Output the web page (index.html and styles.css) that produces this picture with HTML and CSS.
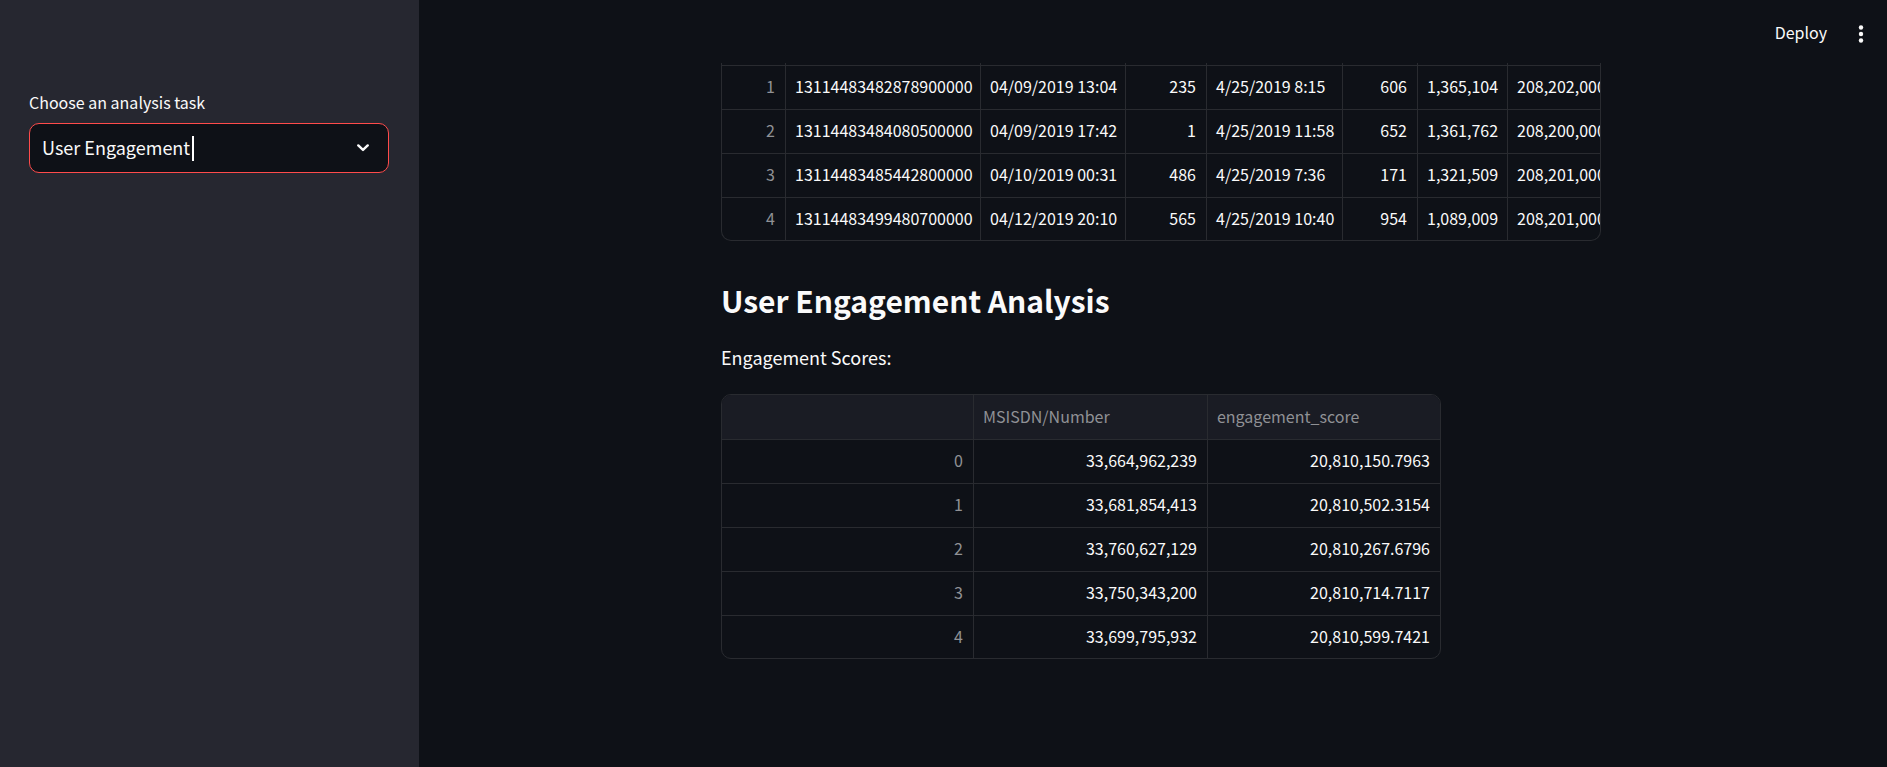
FILE: index.html
```html
<!DOCTYPE html>
<html lang="en">
<head>
<meta charset="utf-8">
<meta name="viewport" content="width=device-width, initial-scale=1">
<title>User Engagement Analysis</title>
<link rel="stylesheet" href="styles.css">
</head>
<body>
<div class="app">
  <aside class="sidebar">
    <label class="field-label" for="task">Choose an analysis task</label>
    <div class="select-box">
      <select id="task" class="select">
        <option>User Engagement</option>
      </select>
      <span class="caret"></span>
      <svg class="chevron" viewBox="0 0 12 8" width="12" height="8" aria-hidden="true"><path d="M1.3 1.4 6 5.9l4.7-4.5" fill="none" stroke="currentColor" stroke-width="2.4" stroke-linecap="round" stroke-linejoin="round"/></svg>
    </div>
  </aside>
  <div class="page">
    <header class="toolbar">
      <button class="deploy" type="button">Deploy</button>
      <button class="menu" type="button" aria-label="Main menu">
        <svg viewBox="0 0 6 18" width="6" height="18" aria-hidden="true"><g fill="currentColor"><circle cx="3" cy="2.5" r="2.2"/><circle cx="3" cy="9" r="2.2"/><circle cx="3" cy="15.5" r="2.2"/></g></svg>
      </button>
    </header>
    <main class="content">
      <div class="frame frame-cut">
        <table class="grid sessions">
          <colgroup><col class="c-index"><col class="c-bearer"><col class="c-start"><col class="c-ms"><col class="c-end"><col class="c-ms-end"><col class="c-dur"><col class="c-imsi"></colgroup>
          <tbody>
            <tr class="spacer"><td></td><td></td><td></td><td></td><td></td><td></td><td></td><td></td></tr>
            <tr><th scope="row">1</th><td>13114483482878900000</td><td>04/09/2019 13:04</td><td class="num">235</td><td>4/25/2019 8:15</td><td class="num">606</td><td class="num">1,365,104</td><td>208,202,000</td></tr>
            <tr><th scope="row">2</th><td>13114483484080500000</td><td>04/09/2019 17:42</td><td class="num">1</td><td>4/25/2019 11:58</td><td class="num">652</td><td class="num">1,361,762</td><td>208,200,000</td></tr>
            <tr><th scope="row">3</th><td>13114483485442800000</td><td>04/10/2019 00:31</td><td class="num">486</td><td>4/25/2019 7:36</td><td class="num">171</td><td class="num">1,321,509</td><td>208,201,000</td></tr>
            <tr><th scope="row">4</th><td>13114483499480700000</td><td>04/12/2019 20:10</td><td class="num">565</td><td>4/25/2019 10:40</td><td class="num">954</td><td class="num">1,089,009</td><td>208,201,000</td></tr>
          </tbody>
        </table>
      </div>
      <h2 class="title">User Engagement Analysis</h2>
      <p class="text">Engagement Scores:</p>
      <div class="frame frame-scores">
        <table class="grid">
          <colgroup><col class="c-row"><col class="c-number"><col></colgroup>
          <thead>
            <tr><td></td><th scope="col">MSISDN/Number</th><th scope="col">engagement_score</th></tr>
          </thead>
          <tbody>
            <tr><th scope="row">0</th><td class="num">33,664,962,239</td><td class="num">20,810,150.7963</td></tr>
            <tr><th scope="row">1</th><td class="num">33,681,854,413</td><td class="num">20,810,502.3154</td></tr>
            <tr><th scope="row">2</th><td class="num">33,760,627,129</td><td class="num">20,810,267.6796</td></tr>
            <tr><th scope="row">3</th><td class="num">33,750,343,200</td><td class="num">20,810,714.7117</td></tr>
            <tr><th scope="row">4</th><td class="num">33,699,795,932</td><td class="num">20,810,599.7421</td></tr>
          </tbody>
        </table>
      </div>
    </main>
  </div>
</div>
</body>
</html>
```
FILE: styles.css
```css
* {
  box-sizing: border-box;
}

body {
  margin: 0;
  background: #0e1117;
  color: #fafafa;
  font-family: "Noto Sans CJK SC", "Noto Sans", sans-serif;
  font-size: 18px;
  line-height: 32px;
}

.app {
  display: flex;
  min-height: 100vh;
}

.sidebar {
  flex: 0 0 419px;
  padding: 87px 30px 0 29px;
  background: #262730;
}

.field-label {
  display: block;
  margin-bottom: 6px;
  font-size: 16px;
  line-height: 30px;
}

.select-box {
  display: flex;
  align-items: center;
  height: 50px;
  padding: 0 19px 0 12px;
  border: 1px solid #ff4b4b;
  border-radius: 10px;
  background: #0e1117;
}

.select {
  appearance: none;
  field-sizing: content;
  padding: 0 0 2px;
  border: 0;
  outline: 0;
  background: transparent;
  color: inherit;
  font: inherit;
}

.caret {
  width: 2px;
  height: 25px;
  margin-left: 2px;
  background: #fff;
}

.chevron {
  margin-left: auto;
}

.page {
  flex: 1;
  min-width: 0;
  padding-left: 16px;
}

.toolbar {
  display: flex;
  align-items: center;
  justify-content: flex-end;
  gap: 31px;
  height: 63px;
  padding: 4px 23px 0 0;
}

.deploy,
.menu {
  display: flex;
  padding: 0;
  border: 0;
  background: transparent;
  color: inherit;
  font: inherit;
  font-size: 16px;
}

.deploy {
  padding-bottom: 3px;
}

.content {
  max-width: 880px;
  margin: 0 auto;
}

.frame {
  overflow: hidden;
  border: 1px solid #292b30;
  border-radius: 10px;
}

.frame-cut {
  border-top: 0;
  border-top-left-radius: 0;
  border-top-right-radius: 0;
}

.frame-scores {
  max-width: 720px;
}

.grid {
  width: 100%;
  table-layout: fixed;
  border-collapse: separate;
  border-spacing: 0;
  font-size: 16px;
  line-height: 24px;
}

.grid th,
.grid td {
  height: 44px;
  padding: 0 10px 3px 9px;
  border-right: 1px solid #292b30;
  border-bottom: 1px solid #292b30;
  font-weight: 400;
  text-align: left;
  white-space: nowrap;
}

.grid th {
  color: #909195;
}

.grid tr > :last-child {
  border-right: 0;
}

.grid tbody tr:last-child > * {
  height: 42px;
  border-bottom: 0;
}

.grid tbody th,
.grid .num {
  text-align: right;
}

.grid thead th,
.grid thead td {
  height: 45px;
  background: #1a1c24;
}

.grid .spacer td {
  height: 3px;
  padding: 0;
}

.sessions tr > :last-child {
  padding-right: 0;
}

.c-index { width: 64px; }
.c-bearer { width: 195px; }
.c-start { width: 145px; }
.c-ms { width: 81px; }
.c-end { width: 136px; }
.c-ms-end { width: 75px; }
.c-dur { width: 90px; }
.c-row { width: 252px; }
.c-number { width: 234px; }

.title {
  margin: 31px 0 0;
  font-size: 30px;
  font-weight: 700;
  line-height: 56px;
}

.text {
  margin: 13px 0 21px;
}
```
